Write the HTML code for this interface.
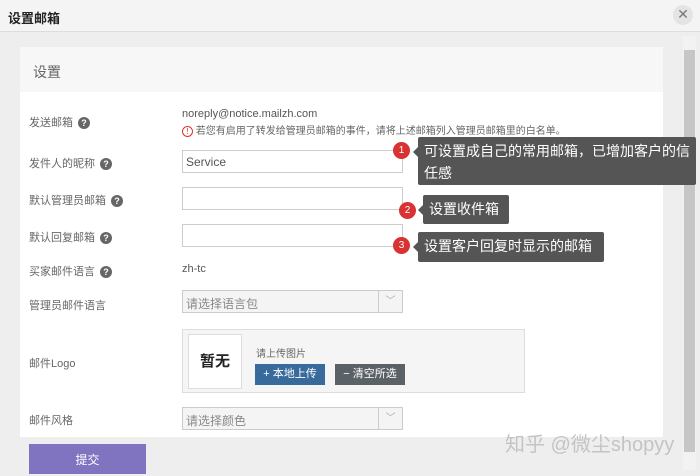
<!DOCTYPE html><html><head><meta charset="utf-8"><style>
*{margin:0;padding:0;box-sizing:border-box}
body{width:700px;height:470px;overflow:hidden;background:#eeeeee;font-family:"Liberation Sans","Noto Sans CJK SC",sans-serif;position:relative;color:#555}
.a{position:absolute}
.lbl{font-size:11px;color:#666;left:29px}
.q{display:inline-block;width:12px;height:12px;border-radius:50%;background:#666;color:#fff;font-size:9px;text-align:center;line-height:12px;font-weight:bold;vertical-align:middle;margin-left:5px}
.inp{left:182px;width:221px;height:23px;border:1px solid #ccc;background:#fff;font-size:12px;color:#555;padding:4px 3px}
.sel{background:#f4f4f4;color:#888}
.sel i{position:absolute;right:0;top:0;width:24px;height:21px;border-left:1px solid #ccc;color:#aaa;font-style:normal;text-align:center;font-size:10px;line-height:21px}
.dot{width:17px;height:17px;border-radius:50%;background:#d83232;color:#fff;font-size:10px;text-align:center;line-height:17px}
.tip{background:#555;color:#fff;font-size:14px;border-radius:2px;padding:3px 6px;line-height:22px}
.tip:before{content:"";position:absolute;left:-5px;top:10px;border:5px solid transparent;border-right-color:#555;border-left:0}
</style></head><body>
<div class="a" style="left:0;top:0;width:700px;height:32px;background:#f4f4f4;border-bottom:1px solid #ddd"></div>
<div class="a" style="left:8px;top:8px;font-size:13px;color:#222;font-weight:bold">设置邮箱</div>
<div class="a" style="left:673px;top:5px;width:20px;height:20px;border-radius:50%;background:#e4e4e4;color:#777;text-align:center;line-height:19px;font-size:14px">✕</div>
<div class="a" style="left:683px;top:36px;width:13px;height:434px;background:#f2f2f2"></div>
<div class="a" style="left:684px;top:50px;width:11px;height:402px;background:#c6c6c6"></div>
<div class="a" style="left:20px;top:47px;width:643px;height:45px;background:#f7f7f7"></div>
<div class="a" style="left:33px;top:62px;font-size:14px;color:#666">设置</div>
<div class="a" style="left:20px;top:92px;width:643px;height:345px;background:#fff"></div>
<div class="a lbl" style="top:114px">发送邮箱<span class="q">?</span></div>
<div class="a" style="left:182px;top:108px;font-size:11px;color:#555">noreply@notice.mailzh.com</div>
<div class="a" style="left:182px;top:122px;font-size:10px;color:#666"><span style="display:inline-block;width:11px;height:11px;border:1px solid #d33;border-radius:50%;color:#d33;font-size:8px;text-align:center;line-height:9px">!</span> 若您有启用了转发给管理员邮箱的事件，请将上述邮箱列入管理员邮箱里的白名单。</div>
<div class="a lbl" style="top:155px">发件人的昵称<span class="q">?</span></div>
<div class="a inp" style="top:150px">Service</div>
<div class="a lbl" style="top:192px">默认管理员邮箱<span class="q">?</span></div>
<div class="a inp" style="top:187px"></div>
<div class="a lbl" style="top:229px">默认回复邮箱<span class="q">?</span></div>
<div class="a inp" style="top:224px"></div>
<div class="a lbl" style="top:263px">买家邮件语言<span class="q">?</span></div>
<div class="a" style="left:182px;top:263px;font-size:11px;color:#555">zh-tc</div>
<div class="a lbl" style="top:297px">管理员邮件语言</div>
<div class="a inp sel" style="top:290px">请选择语言包<i>﹀</i></div>
<div class="a lbl" style="top:355px">邮件Logo</div>
<div class="a" style="left:182px;top:329px;width:343px;height:64px;border:1px solid #ddd;background:#f5f5f5"></div>
<div class="a" style="left:188px;top:334px;width:54px;height:55px;border:1px solid #ddd;background:#fff;font-size:15px;color:#222;font-weight:bold;text-align:center;line-height:53px">暂无</div>
<div class="a" style="left:256px;top:345px;font-size:10px;color:#666">请上传图片</div>
<div class="a" style="left:255px;top:364px;width:70px;height:21px;background:#386a9c;color:#fff;font-size:11px;text-align:center;line-height:21px">+ 本地上传</div>
<div class="a" style="left:335px;top:364px;width:70px;height:21px;background:#5a6268;color:#fff;font-size:11px;text-align:center;line-height:21px">− 清空所选</div>
<div class="a lbl" style="top:412px">邮件风格</div>
<div class="a inp sel" style="top:407px">请选择颜色<i>﹀</i></div>
<div class="a" style="left:29px;top:444px;width:117px;height:30px;background:#8073c0;color:#fff;font-size:12px;text-align:center;line-height:32px">提交</div>
<div class="a" style="left:505px;top:428px;font-size:20px;color:#c4c4c4">知乎 @微尘shopyy</div>
<div class="a dot" style="left:393px;top:142px">1</div>
<div class="a tip" style="left:418px;top:137px;width:278px;height:48px">可设置成自己的常用邮箱，已增加客户的信<br>任感</div>
<div class="a dot" style="left:399px;top:202px">2</div>
<div class="a tip" style="left:423px;top:195px;width:86px;height:29px">设置收件箱</div>
<div class="a dot" style="left:393px;top:237px">3</div>
<div class="a tip" style="left:418px;top:232px;width:186px;height:30px">设置客户回复时显示的邮箱</div>
</body></html>
